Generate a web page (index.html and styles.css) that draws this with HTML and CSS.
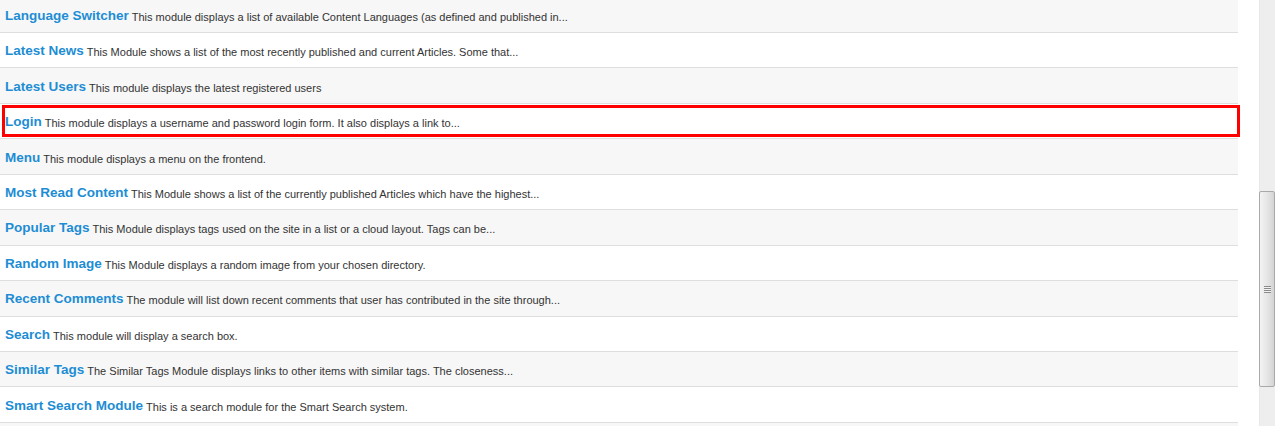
FILE: index.html
```html
<!DOCTYPE html>
<html>
<head>
<meta charset="utf-8">
<link rel="stylesheet" href="styles.css">
</head>
<body>
<div class="page">
  <div class="main">
    <ul class="list">
      <li class="row alt"><a class="title">Language Switcher</a> <span class="desc">This module displays a list of available Content Languages (as defined and published in...</span></li>
      <li class="row"><a class="title">Latest News</a> <span class="desc">This Module shows a list of the most recently published and current Articles. Some that...</span></li>
      <li class="row alt"><a class="title">Latest Users</a> <span class="desc">This module displays the latest registered users</span></li>
      <li class="row selected"><a class="title">Login</a> <span class="desc">This module displays a username and password login form. It also displays a link to...</span></li>
      <li class="row alt"><a class="title">Menu</a> <span class="desc">This module displays a menu on the frontend.</span></li>
      <li class="row"><a class="title">Most Read Content</a> <span class="desc">This Module shows a list of the currently published Articles which have the highest...</span></li>
      <li class="row alt"><a class="title">Popular Tags</a> <span class="desc">This Module displays tags used on the site in a list or a cloud layout. Tags can be...</span></li>
      <li class="row"><a class="title">Random Image</a> <span class="desc">This Module displays a random image from your chosen directory.</span></li>
      <li class="row alt"><a class="title">Recent Comments</a> <span class="desc">The module will list down recent comments that user has contributed in the site through...</span></li>
      <li class="row"><a class="title">Search</a> <span class="desc">This module will display a search box.</span></li>
      <li class="row alt"><a class="title">Similar Tags</a> <span class="desc">The Similar Tags Module displays links to other items with similar tags. The closeness...</span></li>
      <li class="row"><a class="title">Smart Search Module</a> <span class="desc">This is a search module for the Smart Search system.</span></li>
      <li class="row alt tail"></li>
    </ul>
  </div>
  <div class="scrollbar">
    <div class="thumb"><span class="grip"></span></div>
  </div>
</div>
</body>
</html>
```
FILE: styles.css
```css
html, body {
  margin: 0;
  padding: 0;
  background: #fff;
  height: 426px;
  overflow: hidden;
}
.page {
  display: flex;
  height: 426px;
  overflow: hidden;
  font-family: "Liberation Sans", Arial, sans-serif;
}
.main {
  width: 1240px;
  height: 426px;
  overflow: hidden;
  margin-right: 19px;
}
.list {
  list-style: none;
  width: 1238px;
  margin: -2.45px 0 0 0;
  padding: 0;
}
.row {
  position: relative;
  box-sizing: border-box;
  height: 35.45px;
  border-bottom: 1px solid #dedede;
  background: #fff;
  padding: 0 0 0 5px;
  display: flex;
  align-items: center;
  white-space: nowrap;
}
.row.alt {
  background: #f7f7f7;
}
.row.tail {
  height: 4px;
  border-bottom: 0;
}
.title {
  font-size: 13.5px;
  font-weight: bold;
  color: #1d8dd4;
  text-decoration: none;
  margin-right: 3px;
  line-height: 16px;
  position: relative;
  top: 1px;
}
.desc {
  font-size: 11px;
  color: #333;
  line-height: 16px;
  position: relative;
  top: 2px;
}
.row.selected::after {
  content: "";
  position: absolute;
  left: 2px;
  right: -2px;
  top: 1px;
  bottom: 1.5px;
  border: 3px solid #f00;
  box-sizing: border-box;
}
.scrollbar {
  width: 16px;
  height: 426px;
  background: #eeeeee;
  border-left: 1px solid #e8e8e8;
  box-sizing: border-box;
  position: relative;
}
.thumb {
  position: absolute;
  left: -1px;
  right: 0;
  top: 191px;
  height: 196px;
  box-sizing: border-box;
  border: 1px solid #a9a9a9;
  border-radius: 2px;
  background: linear-gradient(to right, #f3f3f3, #e6e6e6 50%, #d4d4d4);
  display: flex;
  align-items: center;
  justify-content: center;
}
.grip {
  width: 7px;
  height: 7px;
  background: repeating-linear-gradient(to bottom, #8a8a8a 0, #8a8a8a 1px, #f2f2f2 1px, #f2f2f2 2px);
}
```
